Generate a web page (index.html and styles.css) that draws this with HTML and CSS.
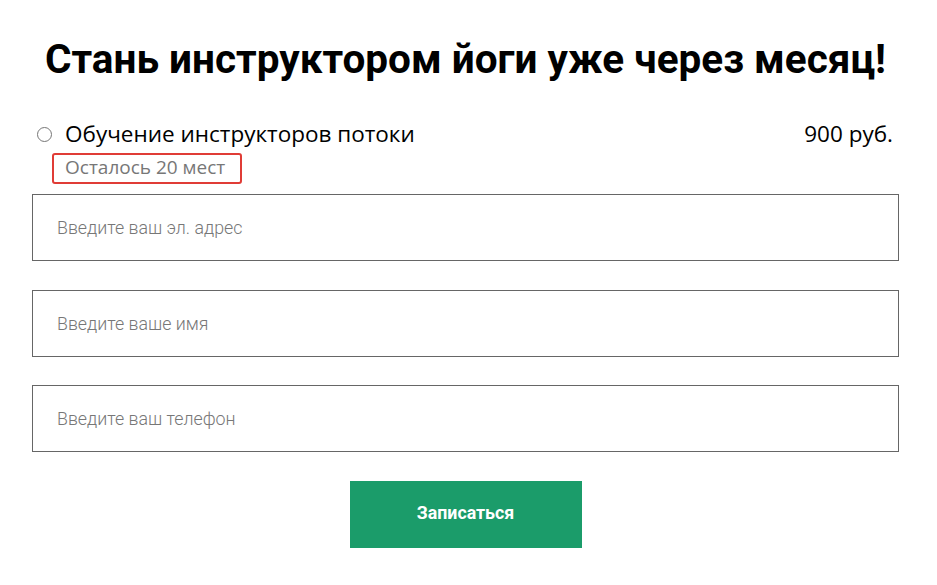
FILE: index.html
```
<!DOCTYPE html>
<html>
<head>
    <title>Инструктор йоги - Запись</title>
    <link rel="stylesheet" href="styles.css">
</head>
<body>
    <div class="container">
        <h1 class="title">Стань инструктором йоги уже через месяц!</h1>

        <div class="course-option">
            <label class="course-label">
                <input type="radio" name="course" class="course-radio">
                <span>Обучение инструкторов потоки</span>
            </label>
            <span class="course-price">900 руб.</span>
        </div>
        <div class="seats-left">Осталось 20 мест</div>

        <form class="signup-form">
            <input type="email" class="input-field" placeholder="Введите ваш эл. адрес">
            <input type="text" class="input-field" placeholder="Введите ваше имя">
            <input type="tel" class="input-field" placeholder="Введите ваш телефон">
            <button type="button" class="submit-btn">Записаться</button>
        </form>
    </div>
</body>
</html>
```

FILE: styles.css
```
* { margin: 0; padding: 0; box-sizing: border-box; }
body { font-family: Roboto, "Liberation Sans", sans-serif; background: #fff; color: #000; }
.container { width: 867px; margin-left: 32px; padding-top: 36px; }
.title {
    font-size: 40.5px; line-height: 46px; font-weight: 700; text-align: center;
}
.course-option {
    display: flex; justify-content: space-between; align-items: center;
    margin-top: 37px; padding: 0 6px 0 5px;
    font-family: "Open Sans", sans-serif; font-size: 22.5px; line-height: 30px;
}
.course-label { display: flex; align-items: center; }
.course-radio {
    appearance: none; width: 15px; height: 15px; margin: 1px 13px 0 0;
    border: 1px solid #767676; border-radius: 50%; background: #fff;
}
.seats-left {
    display: inline-block; margin: 4px 0 0 20px; padding: 0 15px 3px 11px;
    border: 2px solid #e03c36; border-radius: 3px;
    font-family: "Open Sans", sans-serif; font-size: 19px; line-height: 24px; color: #777;
}
.signup-form { display: flex; flex-direction: column; align-items: center; gap: 28.5px; margin-top: 10px; }
.input-field {
    width: 100%; height: 67px; padding: 0 24px; border: 1px solid #666; border-radius: 0;
    font-family: Roboto, sans-serif; font-size: 17.8px; font-weight: 300; color: #333; outline: none;
}
.input-field::placeholder { color: #777; }
.submit-btn {
    width: 232px; height: 67px; padding-bottom: 3px; border: none; cursor: pointer;
    background-color: #1b9c6a; color: #fff;
    font-family: Roboto, sans-serif; font-size: 17.8px; font-weight: 700;
}
```
